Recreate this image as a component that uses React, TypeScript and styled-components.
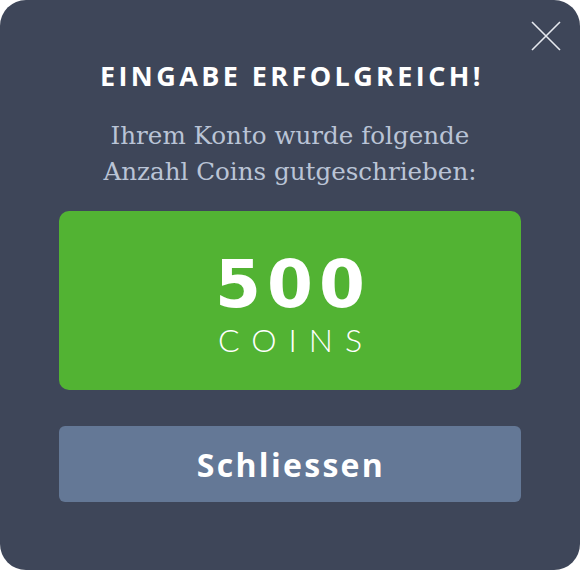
import React from "react";
import styled, { createGlobalStyle } from "styled-components";

const Global = createGlobalStyle`
  html, body { margin: 0; padding: 0; background: #ffffff; }
  * { box-sizing: border-box; }
`;

const Modal = styled.div`
  position: relative;
  width: 580px;
  height: 570px;
  background: #3e4659;
  border-radius: 26px;
  display: flex;
  flex-direction: column;
  align-items: center;
  padding: 59px 59px 0;
  overflow: hidden;
`;

const CloseButton = styled.button`
  position: absolute;
  top: 20px;
  right: 18px;
  width: 32px;
  height: 32px;
  padding: 0;
  border: none;
  background: transparent;
  cursor: pointer;
  display: flex;
  align-items: center;
  justify-content: center;
`;

const Title = styled.h1`
  margin: 0 -4px 0 0;
  font-family: "Open Sans", Lato, sans-serif;
  font-weight: 700;
  font-size: 27px;
  line-height: 34px;
  letter-spacing: 3.4px;
  color: #ffffff;
  text-align: center;
`;

const Message = styled.p`
  margin: 25px 0 0;
  font-family: "DejaVu Serif", serif;
  font-weight: 400;
  font-size: 24.6px;
  line-height: 36px;
  color: #bac4d6;
  text-align: center;
`;

const CoinBox = styled.div`
  margin-top: 21px;
  width: 100%;
  height: 179px;
  background: #52b333;
  border-radius: 10px;
  display: flex;
  flex-direction: column;
  align-items: center;
  justify-content: center;
  color: #ffffff;
`;

const Amount = styled.div`
  font-family: "DejaVu Sans", sans-serif;
  font-weight: 700;
  font-size: 66px;
  line-height: 72px;
  letter-spacing: 6px;
  margin-right: -6px;
  margin-top: 6px;
`;

const Unit = styled.div`
  font-family: Lato, "Open Sans", sans-serif;
  font-weight: 300;
  font-size: 32px;
  line-height: 38px;
  letter-spacing: 12px;
  margin-right: -12px;
`;

const CloseAction = styled.button`
  margin-top: 36px;
  width: 100%;
  height: 76px;
  border: none;
  border-radius: 6px;
  background: #647896;
  color: #ffffff;
  font-family: "Open Sans", Lato, sans-serif;
  font-weight: 700;
  font-size: 32px;
  letter-spacing: 2.3px;
  padding: 0 0 0 2px;
  cursor: pointer;
`;

export default function App() {
  return (
    <>
      <Global />
      <Modal>
        <CloseButton aria-label="Schliessen">
          <svg width="30" height="30" viewBox="0 0 30 30">
            <path d="M1 1 L29 29 M29 1 L1 29" stroke="#e6e9ef" strokeWidth="1.6" fill="none" />
          </svg>
        </CloseButton>
        <Title>EINGABE ERFOLGREICH!</Title>
        <Message>
          Ihrem Konto wurde folgende
          <br />
          Anzahl Coins gutgeschrieben:
        </Message>
        <CoinBox>
          <Amount>500</Amount>
          <Unit>COINS</Unit>
        </CoinBox>
        <CloseAction>Schliessen</CloseAction>
      </Modal>
    </>
  );
}
